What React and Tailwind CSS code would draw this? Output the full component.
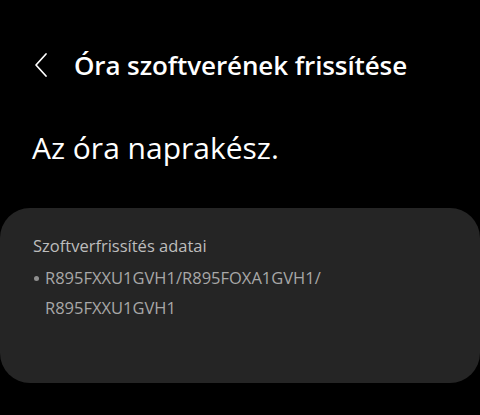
export default function App() {
  return (
    <div
      className="h-[415px] w-[480px] overflow-hidden bg-black text-white"
      style={{ fontFamily: '"Open Sans", "Noto Sans", sans-serif' }}
    >
      <header className="flex items-center pl-[33px] pt-[48px]">
        <svg width="16" height="26" viewBox="0 0 16 26" className="shrink-0">
          <path d="M13 2 L3 13 L13 24" fill="none" stroke="#fff" strokeWidth="1.7" strokeLinecap="round" strokeLinejoin="round" />
        </svg>
        <h1 className="ml-[25px] text-[26px] font-semibold leading-[34px] tracking-[-0.1px]">
          Óra szoftverének frissítése
        </h1>
      </header>
      <p className="mt-[46px] pl-[32px] text-[30px] leading-[40px]">Az óra naprakész.</p>
      <section className="mt-[40px] h-[175px] rounded-[30px] bg-[#252525] px-[33px] pt-[26px]">
        <h2 className="text-[16.5px] leading-[24px] text-[#bdbdbd]">Szoftverfrissítés adatai</h2>
        <div className="mt-[5px] flex text-[16.5px] leading-[30px] text-[#a8a8a8]">
          <span className="flex h-[30px] w-[12px] shrink-0 items-center">
            <span className="ml-[1px] h-[5px] w-[5px] rounded-full bg-[#8f8f8f]" />
          </span>
          <span>
            R895FXXU1GVH1/R895FOXA1GVH1/
            <br />
            R895FXXU1GVH1
          </span>
        </div>
      </section>
    </div>
  );
}
